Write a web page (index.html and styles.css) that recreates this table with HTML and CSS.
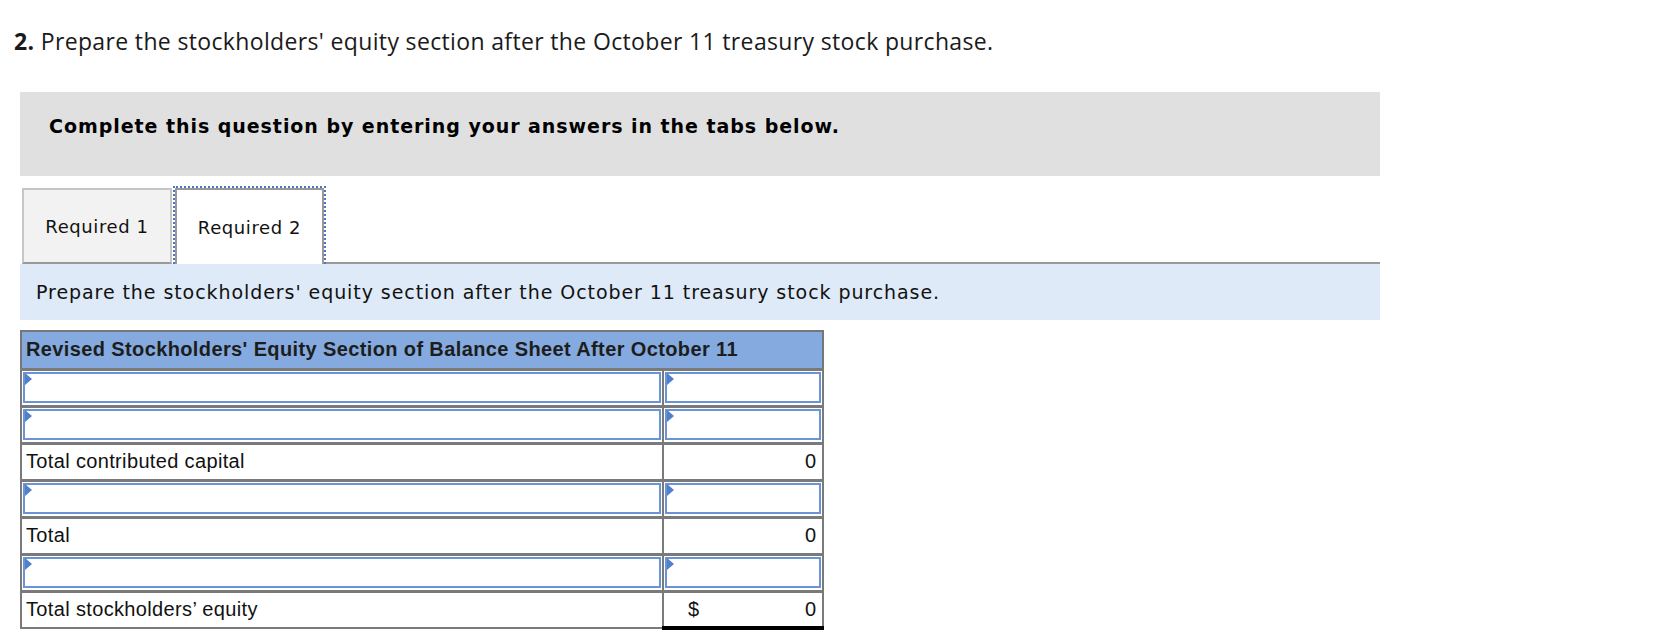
FILE: index.html
```html
<!DOCTYPE html>
<html>
<head>
<meta charset="utf-8">
<link rel="stylesheet" href="styles.css">
</head>
<body>
<div class="page">
  <p class="question"><b>2.</b> Prepare the stockholders' equity section after the October 11 treasury stock purchase.</p>
  <div class="instructions">Complete this question by entering your answers in the tabs below.</div>
  <div class="tabs">
    <div class="tab tab-off">Required 1</div>
    <div class="tab tab-on">Required 2</div>
    <div class="tab-rest"></div>
  </div>
  <div class="prompt">Prepare the stockholders' equity section after the October 11 treasury stock purchase.</div>
  <table class="sheet">
    <colgroup><col class="col1"><col class="col2"></colgroup>
    <tr><th colspan="2">Revised Stockholders' Equity Section of Balance Sheet After October 11</th></tr>
    <tr class="input-row"><td><div class="inp"><span class="flag"></span></div></td><td><div class="inp"><span class="flag"></span></div></td></tr>
    <tr class="input-row"><td><div class="inp"><span class="flag"></span></div></td><td><div class="inp"><span class="flag"></span></div></td></tr>
    <tr class="total-row"><td class="label">Total contributed capital</td><td class="val">0</td></tr>
    <tr class="input-row"><td><div class="inp"><span class="flag"></span></div></td><td><div class="inp"><span class="flag"></span></div></td></tr>
    <tr class="total-row"><td class="label">Total</td><td class="val">0</td></tr>
    <tr class="input-row"><td><div class="inp"><span class="flag"></span></div></td><td><div class="inp"><span class="flag"></span></div></td></tr>
    <tr class="total-row final"><td class="label">Total stockholders’ equity</td><td class="val"><div class="money"><span>$</span><span>0</span></div></td></tr>
  </table>
</div>
</body>
</html>
```
FILE: styles.css
```css
html, body {
  margin: 0;
  padding: 0;
  background: #ffffff;
}
.page {
  width: 1664px;
  height: 644px;
  overflow: hidden;
}
.question {
  margin: 0;
  padding: 27px 0 0 14px;
  height: 65px;
  box-sizing: border-box;
  font-family: "Open Sans", Lato, sans-serif;
  font-size: 23px;
  letter-spacing: 0.35px;
  color: #1a1a1a;
  line-height: 28px;
}
.question b {
  font-weight: 700;
}
.instructions {
  margin: 27px 0 0 20px;
  width: 1360px;
  height: 84px;
  box-sizing: border-box;
  background: #e0e0e0;
  padding: 0 0 17px 29px;
  display: flex;
  align-items: center;
  font-family: "DejaVu Sans", Verdana, sans-serif;
  font-weight: bold;
  font-size: 19px;
  letter-spacing: 0.95px;
  color: #000;
}
.tabs {
  display: flex;
  align-items: flex-end;
  margin: 10px 0 0 20px;
  width: 1360px;
  height: 78px;
}
.tab {
  box-sizing: border-box;
  display: flex;
  align-items: center;
  justify-content: center;
  font-family: "DejaVu Sans", Verdana, sans-serif;
  font-size: 18px;
  letter-spacing: 0.6px;
  color: #111;
}
.tab-off {
  margin-left: 2px;
  width: 150px;
  height: 76px;
  background: #f2f2f2;
  border: 2px solid #c6c6c6;
  border-bottom: 2px solid #999;
}
.tab-on {
  margin-left: 3px;
  width: 149px;
  height: 76px;
  background: #fff;
  border: 2px solid #999;
  border-bottom: none;
  position: relative;
  z-index: 1;
}
.tab-on::before {
  content: "";
  position: absolute;
  left: -4px;
  right: -4px;
  top: -4px;
  bottom: 0;
  border: 2px dotted #4a78c2;
  border-bottom: none;
}
.tab-rest {
  flex: 1;
  height: 0;
  border-bottom: 2px solid #999;
}
.prompt {
  margin-left: 20px;
  width: 1360px;
  height: 56px;
  box-sizing: border-box;
  background: #deeaf7;
  padding-left: 16px;
  display: flex;
  align-items: center;
  font-family: "DejaVu Sans", Verdana, sans-serif;
  font-size: 19px;
  letter-spacing: 0.93px;
  color: #111;
}
.sheet {
  margin: 10px 0 0 20px;
  border-collapse: collapse;
  table-layout: fixed;
  width: 802px;
  font-family: "Liberation Sans", Arial, sans-serif;
  color: #111;
}
.col1 { width: 642px; }
.col2 { width: 160px; }
.sheet th {
  background: #84aadf;
  border: 2px solid #777;
  height: 38px;
  box-sizing: border-box;
  text-align: left;
  padding: 0 0 0 4px;
  font-size: 20px;
  letter-spacing: 0.38px;
  font-weight: bold;
  color: #1d1d1d;
  white-space: nowrap;
}
.sheet td {
  border: 2px solid #7a7a7a;
  height: 37px;
  box-sizing: border-box;
  padding: 0;
  font-size: 20px;
}
.input-row td {
  padding: 1px;
  border-top-width: 3px;
  border-bottom-width: 3px;
}
.inp {
  position: relative;
  height: 31px;
  border: 2px solid #6b94d4;
  box-sizing: border-box;
  background: #fff;
}
.flag {
  position: absolute;
  left: 0;
  top: 0;
  width: 0;
  height: 0;
  border-top: 6px solid transparent;
  border-bottom: 6px solid transparent;
  border-left: 7px solid #4f80cc;
  margin-top: -1px;
}
.label {
  padding-left: 4px !important;
  letter-spacing: 0.35px;
}
.val {
  text-align: right;
  padding-right: 6px !important;
  border-top: 3px solid #000 !important;
}
.final .val {
  border-bottom: 4px solid #000 !important;
  padding-left: 24px !important;
}
.money {
  display: flex;
  justify-content: space-between;
}
```
